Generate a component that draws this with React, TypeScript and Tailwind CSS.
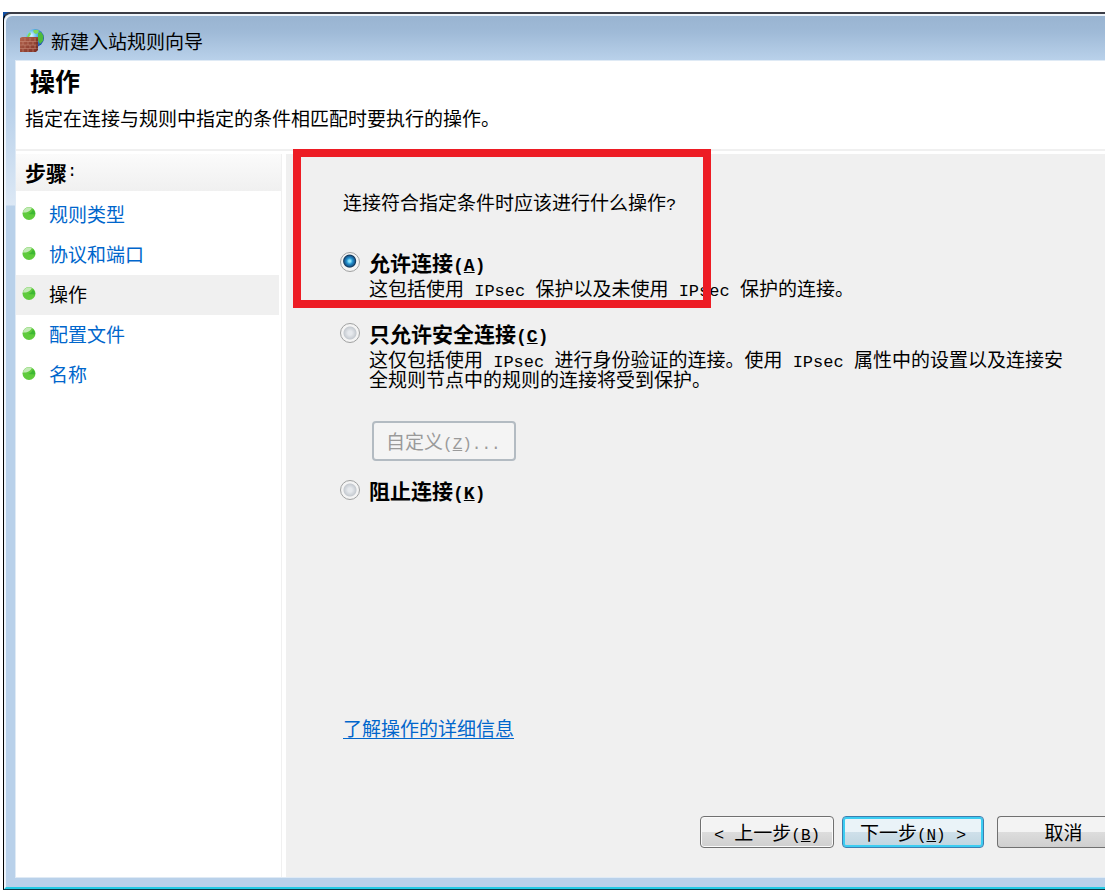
import React, { useState } from 'react';

const steps = ['规则类型', '协议和端口', '操作', '配置文件', '名称'];
const currentStep = '操作';

const radioClass =
  'w-5 h-5 flex-shrink-0 appearance-none rounded-full border border-[#a0a1a1] bg-[radial-gradient(circle,#e6e9ed_0_2px,#c6cbd1_6px,#f4f4f4_7px)] checked:bg-[radial-gradient(circle_at_48%_45%,#8fe6fb_0_1px,#2492cf_3px,#1a5f96_5px,#123a5c_6px,#f4f4f4_7px)]';

const FirewallIcon: React.FC = () => (
  <svg className="w-6 h-6 flex-shrink-0" viewBox="0 0 24 24" aria-hidden="true">
    <defs>
      <radialGradient id="globe" cx="0.3" cy="0.35" r="0.75">
        <stop offset="0" stopColor="#d8f8ff" />
        <stop offset="0.45" stopColor="#4fb0ee" />
        <stop offset="1" stopColor="#1546ac" />
      </radialGradient>
      <linearGradient id="wall" x1="0" y1="0" x2="1" y2="1">
        <stop offset="0" stopColor="#b5664f" />
        <stop offset="1" stopColor="#7a2c22" />
      </linearGradient>
    </defs>
    <circle cx="15" cy="9" r="9" fill="url(#globe)" />
    <path d="M13 1.500c2-1 4-1 6 0l-1 2.500-2 1-2-1zM8 5l2-2 1 2-2 3H7z" fill="#7fd858" />
    <path d="M18 4l3-1 2.500 4-0.500 5-3 3-2-4z" fill="#4dbb3c" />
    <path d="M0 9l2-1h16v13l-2 2H0z" fill="url(#wall)" />
    <path d="M0 12.500h18M0 16h18M0 19.500h18M5 9v3.500M10 9v3.500M15 9v3.500M3 12.500v3.500M8 12.500v3.500M13 12.500v3.500M5 16v3.500M10 16v3.500M15 16v3.500M3 19.500v3.500M8 19.500v3.500M13 19.500v3.500" stroke="#cf9480" strokeWidth="0.5" />
    <path d="M17 9.500v12" stroke="#5d211b" strokeWidth="0.6" />
  </svg>
);

const StepBullet: React.FC = () => (
  <svg className="w-3.5 h-3.5 flex-shrink-0" viewBox="0 0 14 14" aria-hidden="true">
    <circle cx="7" cy="6.500" r="6.500" fill="#5fcb3c" />
    <path d="M0.800 5.500a6.300 6.300 0 0 1 9-4.500C9 3 7 5 4 5.500z" fill="#d3efcb" opacity="0.85" />
    <path d="M6 7c3-0.500 4-2.500 5-4.500a6.300 6.300 0 0 1 2 5z" fill="#2fae30" opacity="0.7" />
  </svg>
);

const Latin: React.FC<{ children: React.ReactNode }> = ({ children }) => (
  <span className="font-['Liberation_Mono',monospace] text-[17px] leading-3 whitespace-pre-wrap">{children}</span>
);

const Key: React.FC<{ letter: string }> = ({ letter }) => (
  <span className="font-['Liberation_Mono',monospace] text-[16px] leading-3">
    (<u>{letter}</u>)
  </span>
);

interface OptionProps {
  label: string;
  letter: string;
  className: string;
  checked: boolean;
  onSelect: () => void;
}

const Option: React.FC<OptionProps> = ({ label, letter, className, checked, onSelect }) => (
  <label className={`h-6 flex items-center gap-[9px] text-[21px] font-bold ${className}`}>
    <input type="radio" name="action" className={radioClass} checked={checked} onChange={onSelect} />
    <span>
      {label}
      <span className="font-['Liberation_Mono',monospace] text-[18px] leading-3">
        (<u>{letter}</u>)
      </span>
    </span>
  </label>
);

const App: React.FC = () => {
  const [action, setAction] = useState('allow');

  return (
    <div className="min-h-screen flex flex-col pt-3 pl-[3px] pr-[7px] bg-white text-black text-[19px] leading-5 font-['Noto_Sans_CJK_SC',sans-serif]">
      <div className="flex-1 flex flex-col bg-[#0f4fa6]">
        <div className="flex-1 flex flex-col border-l border-t-2 border-b border-l-black border-t-[#3b3d46] border-b-[#0b3a48] rounded-tl-lg bg-[#b9d1ea]">
          <div className="flex-1 flex flex-col border-l-2 border-t-2 border-b-2 border-l-[#eef4fa] border-t-[#eef4fa] border-b-[#22cbe4] rounded-tl-lg bg-[linear-gradient(#99b4d1_0px,#9fbad7_16px,#b9d1ea_44px,#b9d1ea_90px,#dce8f5_189px,#b9d1ea_190px)]">
            {/* Title bar */}
            <header className="h-11 flex items-center gap-[7px] pl-3.5 pt-1.5">
              <FirewallIcon />
              <span>新建入站规则向导</span>
            </header>

            <div className="flex-1 flex flex-col ml-[9px] mb-[9px] border-l border-t border-b border-[#dfeaf5] bg-white">
              <div className="h-[90px] pl-[9px] pt-[3px] border-b-2 border-[#f0f0f0]">
                <h1 className="pl-[5px] text-[25px] leading-8 font-bold">操作</h1>
                <p className="pt-3">指定在连接与规则中指定的条件相匹配时要执行的操作。</p>
              </div>

              <div className="flex-1 flex pt-[3px]">
                {/* Steps */}
                <nav className="w-[266px] flex-shrink-0 border-r border-[#f0f0f0]">
                  <h2 className="h-[37px] flex items-center pl-[9px] pb-0.5 text-[21px] bg-gradient-to-b from-[#fbfbfb] to-[#f0f0f0]">
                    <span className="font-bold">步骤</span>
                    <Latin>:</Latin>
                  </h2>
                  <ul className="pt-1 pr-0.5">
                    {steps.map((step) => (
                      <li
                        key={step}
                        className={`h-10 flex items-center gap-[13px] pl-1.5 pb-0.5 ${step === currentStep ? 'bg-[#f0f0f0]' : ''}`}
                      >
                        <StepBullet />
                        {step === currentStep ? (
                          <span>{step}</span>
                        ) : (
                          <a href="#" className="text-[#0066cc]">{step}</a>
                        )}
                      </li>
                    ))}
                  </ul>
                </nav>

                {/* Action page */}
                <main className="relative flex-1 flex flex-col items-start ml-1 pl-[54px] pr-9 pt-[38px] bg-[#f0f0f0]">
                  <p className="pl-[3px]">连接符合指定条件时应该进行什么操作<Latin>?</Latin></p>

                  <Option
                    label="允许连接"
                    letter="A"
                    className="mt-[38px]"
                    checked={action === 'allow'}
                    onSelect={() => setAction('allow')}
                  />
                  <p className="pl-[29px] mt-1">
                    这包括使用<Latin> IPsec </Latin>保护以及未使用<Latin> IPsec </Latin>保护的连接。
                  </p>

                  <Option
                    label="只允许安全连接"
                    letter="C"
                    className="mt-[23px]"
                    checked={action === 'secure'}
                    onSelect={() => setAction('secure')}
                  />
                  <p className="pl-[29px] mt-1">
                    这仅包括使用<Latin> IPsec </Latin>进行身份验证的连接。使用<Latin> IPsec </Latin>属性中的设置以及连接安全规则节点中的规则的连接将受到保护。
                  </p>
                  <button
                    type="button"
                    disabled
                    className="ml-8 mt-8 w-36 h-10 pl-3 text-left rounded border-2 border-[#b3bbc2] bg-[#f4f4f4] text-[#9a9a9a]"
                  >
                    自定义<Key letter="Z" />
                    <span className="font-['Liberation_Mono',monospace] text-[16px] leading-3">...</span>
                  </button>

                  <Option
                    label="阻止连接"
                    letter="K"
                    className="mt-[17px]"
                    checked={action === 'block'}
                    onSelect={() => setAction('block')}
                  />

                  <a href="#" className="mt-auto mb-[78px] ml-[3px] text-[#0066cc] underline underline-offset-2">了解操作的详细信息</a>

                  <div className="self-end flex -mr-9 mb-[29px]">
                    <button
                      type="button"
                      className="w-[134px] h-8 mr-2 rounded border border-[#707070] bg-[linear-gradient(#f3f3f3_50%,#dddddd_50%,#cfcfcf)] shadow-[inset_0_0_0_1px_#fafafa]"
                    >
                      <Latin>&lt; </Latin>上一步<Key letter="B" />
                    </button>
                    <button
                      type="button"
                      className="w-[142px] h-8 mr-[13px] rounded border border-[#3c7fb1] bg-[linear-gradient(#eaf3f8_50%,#cfe0ea_50%,#bfd5e0)] shadow-[inset_0_0_0_2px_#3ccdf2]"
                    >
                      下一步<Key letter="N" /><Latin> &gt;</Latin>
                    </button>
                    <button
                      type="button"
                      className="w-[108px] h-8 pl-6 rounded-l border border-r-0 border-[#707070] bg-[linear-gradient(#f3f3f3_50%,#dddddd_50%,#cfcfcf)]"
                    >
                      取消
                    </button>
                  </div>

                  {/* Highlight frame over the allowed option */}
                  <div className="absolute left-[7px] -top-[5px] w-[418px] h-[159px] border-8 border-[#ed1c24] pointer-events-none" />
                </main>
              </div>
            </div>
          </div>
        </div>
      </div>
    </div>
  );
};

export default App;
